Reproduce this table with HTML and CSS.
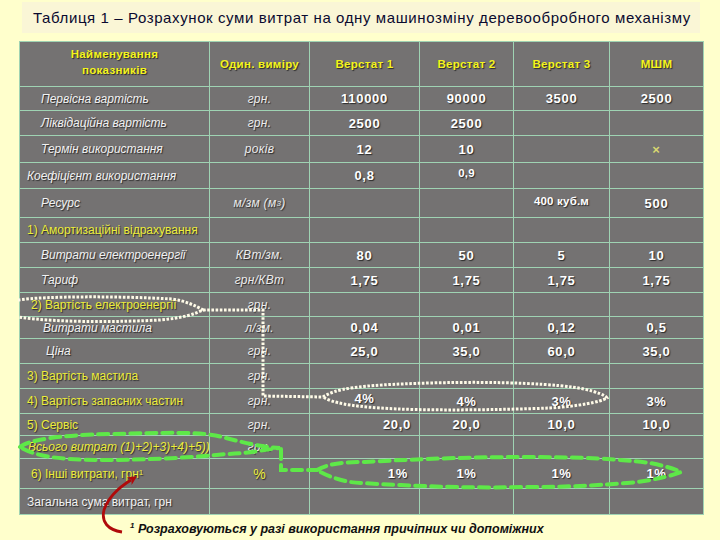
FILE: index.html
```html
<!DOCTYPE html>
<html lang="uk">
<head>
<meta charset="utf-8">
<title>Таблиця 1</title>
<link rel="stylesheet" href="styles.css">
</head>
<body>
<div class="page">
  <div class="title">Таблиця 1 – Розрахунок суми витрат на одну машинозміну деревообробного механізму</div>

  <div class="grid">
    <div class="c hd two">Найменування<br>показників</div>
    <div class="c hd">Один. виміру</div>
    <div class="c hd">Верстат 1</div>
    <div class="c hd">Верстат 2</div>
    <div class="c hd">Верстат 3</div>
    <div class="c hd">МШМ</div>

    <div class="c lb it p20">Первісна вартість</div>
    <div class="c un">грн.</div>
    <div class="c v">110000</div>
    <div class="c v">90000</div>
    <div class="c v">3500</div>
    <div class="c v">2500</div>

    <div class="c lb it p20">Ліквідаційна вартість</div>
    <div class="c un">грн.</div>
    <div class="c v">2500</div>
    <div class="c v">2500</div>
    <div class="c v"></div>
    <div class="c v"></div>

    <div class="c lb it p20">Термін використання</div>
    <div class="c un">років</div>
    <div class="c v">12</div>
    <div class="c v">10</div>
    <div class="c v"></div>
    <div class="c v"><span class="cross">×</span></div>

    <div class="c lb it p6">Коефіцієнт використання</div>
    <div class="c un"></div>
    <div class="c v">0,8</div>
    <div class="c v up sm">0,9</div>
    <div class="c v"></div>
    <div class="c v"></div>

    <div class="c lb it p20">Ресурс</div>
    <div class="c un">м/зм (м<sup>3</sup>)</div>
    <div class="c v"></div>
    <div class="c v"></div>
    <div class="c v sm up">400 куб.м</div>
    <div class="c v">500</div>

    <div class="c lb yl p6">1) Амортизаційні відрахування</div>
    <div class="c un"></div>
    <div class="c v"></div>
    <div class="c v"></div>
    <div class="c v"></div>
    <div class="c v"></div>

    <div class="c lb it p20">Витрати електроенергії</div>
    <div class="c un">КВт/зм.</div>
    <div class="c v">80</div>
    <div class="c v">50</div>
    <div class="c v">5</div>
    <div class="c v">10</div>

    <div class="c lb it p20">Тариф</div>
    <div class="c un">грн/КВт</div>
    <div class="c v">1,75</div>
    <div class="c v">1,75</div>
    <div class="c v">1,75</div>
    <div class="c v">1,75</div>

    <div class="c lb yl p10">2) Вартість електроенергії</div>
    <div class="c un">грн.</div>
    <div class="c v"></div>
    <div class="c v"></div>
    <div class="c v"></div>
    <div class="c v"></div>

    <div class="c lb it p22">Витрати мастила</div>
    <div class="c un">л/зм.</div>
    <div class="c v">0,04</div>
    <div class="c v">0,01</div>
    <div class="c v">0,12</div>
    <div class="c v">0,5</div>

    <div class="c lb it p26">Ціна</div>
    <div class="c un">грн.</div>
    <div class="c v">25,0</div>
    <div class="c v">35,0</div>
    <div class="c v">60,0</div>
    <div class="c v">35,0</div>

    <div class="c lb yl p6">3) Вартість мастила</div>
    <div class="c un">грн.</div>
    <div class="c v"></div>
    <div class="c v"></div>
    <div class="c v"></div>
    <div class="c v"></div>

    <div class="c lb yl p6">4) Вартість запасних частин</div>
    <div class="c un">грн.</div>
    <div class="c v up">4%</div>
    <div class="c v">4%</div>
    <div class="c v">3%</div>
    <div class="c v">3%</div>

    <div class="c lb yl p6">5) Сервіс</div>
    <div class="c un">грн.</div>
    <div class="c v end7">20,0</div>
    <div class="c v">20,0</div>
    <div class="c v">10,0</div>
    <div class="c v">10,0</div>

    <div class="c lb yl it p8">Всього витрат (1)+2)+3)+4)+5))</div>
    <div class="c un">грн.</div>
    <div class="c v"></div>
    <div class="c v"></div>
    <div class="c v"></div>
    <div class="c v"></div>

    <div class="c lb yl p10">6) Інші витрати, грн <sup>1</sup></div>
    <div class="c un pc">%</div>
    <div class="c v end11">1%</div>
    <div class="c v">1%</div>
    <div class="c v">1%</div>
    <div class="c v">1%</div>

    <div class="c lb p6">Загальна сума витрат, грн</div>
    <div class="c un"></div>
    <div class="c v"></div>
    <div class="c v"></div>
    <div class="c v"></div>
    <div class="c v"></div>
  </div>

  <div class="note"><sup>1</sup> Розраховуються у разі використання причіпних чи допоміжних</div>

  <svg class="overlay" width="720" height="540" viewBox="0 0 720 540" xmlns="http://www.w3.org/2000/svg">
    <defs>
      <marker id="ah" markerWidth="9" markerHeight="9" refX="2" refY="4.5" orient="auto" markerUnits="userSpaceOnUse">
        <path d="M9 4.5 L0 0 L2.5 4.5 L0 9 Z" fill="#b00a0a"/>
      </marker>
    </defs>
    <g class="dots">
      <path d="M18 300 C45 296 120 296 172 299 C186 301 196 306 203 310 C194 314 184 318 160 320 C120 322 60 323 18 317"/>
      <path d="M203 310 L263 310 L263 396 L323 397"/>
      <path d="M323 397 C335 389 355 385 430 383 C500 381 560 384 584 389 C597 392 605 395 607 398 C600 402 580 406 550 408 C500 410 420 411 380 408 C350 406 333 403 323 397 Z"/>
    </g>
    <g class="dash">
      <path d="M20 447 C28 440 60 435 110 434 C160 433 200 431 222 437 C245 443 262 447 280 448 C262 450 245 454 225 454 C200 457 150 460 100 460 C60 460 34 456 20 447 Z"/>
      <path d="M281 449 L281 470 L317 470"/>
      <path d="M317 470 C330 463 345 462 365 462 C400 460 460 457 527 457 C580 457 620 459 650 463 C665 466 675 469 681 472 C672 476 650 481 627 483 C590 486 560 487 527 487 C480 488 440 487 400 485 C375 484 360 483 350 482 C335 479 325 475 317 470 Z"/>
    </g>
    <path class="arrow" d="M122 532 C108 530 101 522 104 510 C108 498 118 488 131 480" marker-end="url(#ah)"/>
  </svg>
</div>
</body>
</html>
```
FILE: styles.css
```css
html, body {
  margin: 0;
  padding: 0;
  background: #ffffcc;
}
.page {
  position: relative;
  width: 720px;
  height: 540px;
  overflow: hidden;
  background: #ffffcc;
  font-family: "Liberation Sans", Arial, sans-serif;
}
.title {
  margin: 2px 20px 0 22px;
  height: 31px;
  padding-left: 11px;
  background: #faf6d6;
  display: flex;
  align-items: center;
  font-size: 15px;
  color: #0a0a30;
  letter-spacing: 0.6px;
  white-space: nowrap;
}
.grid {
  margin: 8px 0 0 19px;
  width: 685px;
  box-sizing: border-box;
  border: 1px solid #9fd3b3;
  background: #9fd3b3;
  display: grid;
  grid-template-columns: 189px 99px 109px 93px 95px 93px;
  grid-template-rows: 44px 23px 24px 26px 25px 28px 24px 24px 24px 23px 21px 24px 24px 24px 21px 22px 29px 25px;
  gap: 1px;
}
.c {
  background: #747272;
  display: flex;
  align-items: center;
  justify-content: center;
  color: #ffffff;
  text-shadow: 1px 1px 1px #2a2a2a;
  white-space: nowrap;
  overflow: hidden;
}
.hd {
  color: #f4f41c;
  font-weight: bold;
  font-size: 11.5px;
  letter-spacing: 0.3px;
  text-align: center;
  line-height: 16px;
}
.two {
  padding-bottom: 4px;
}
.lb {
  justify-content: flex-start;
  font-size: 12px;
  color: #f2f2f2;
}
.it {
  font-style: italic;
}
.yl {
  color: #eded3a;
}
.p6 { padding-left: 7px; }
.p8 { padding-left: 8px; }
.p10 { padding-left: 11px; }
.p20 { padding-left: 21px; }
.p22 { padding-left: 23px; }
.p26 { padding-left: 26px; }
.un {
  font-style: italic;
  font-size: 12px;
  letter-spacing: 0.3px;
  color: #ececec;
}
.un.pc {
  font-style: normal;
  font-size: 14px;
  color: #eded3a;
}
.un sup {
  font-size: 8px;
}
.lb sup {
  font-size: 8px;
  position: relative;
  top: -1px;
}
.v {
  font-weight: bold;
  font-size: 13px;
  letter-spacing: 0.7px;
}
.v.sm {
  font-size: 11.5px;
  letter-spacing: 0.2px;
}
.v.up {
  padding-bottom: 5px;
}
.end7 {
  justify-content: flex-end;
  padding-right: 8px;
}
.end11 {
  justify-content: flex-end;
  padding-right: 11px;
}
.cross {
  color: #d8d870;
  font-size: 13px;
  font-weight: bold;
  text-shadow: none;
}
.note {
  margin-top: 6px;
  padding-left: 130px;
  font-size: 12.5px;
  font-weight: bold;
  font-style: italic;
  color: #111;
  white-space: nowrap;
}
.note sup {
  font-size: 8px;
}
.overlay {
  position: absolute;
  left: 0;
  top: 0;
  pointer-events: none;
}
.dots path {
  fill: none;
  stroke: #fffbe8;
  stroke-width: 3;
  stroke-dasharray: 2.6 1.6;
}
.dash path {
  fill: none;
  stroke: #5ee848;
  stroke-width: 4;
  stroke-dasharray: 10 6;
  stroke-linecap: round;
}
.arrow {
  fill: none;
  stroke: #b00a0a;
  stroke-width: 2.8;
}
```
